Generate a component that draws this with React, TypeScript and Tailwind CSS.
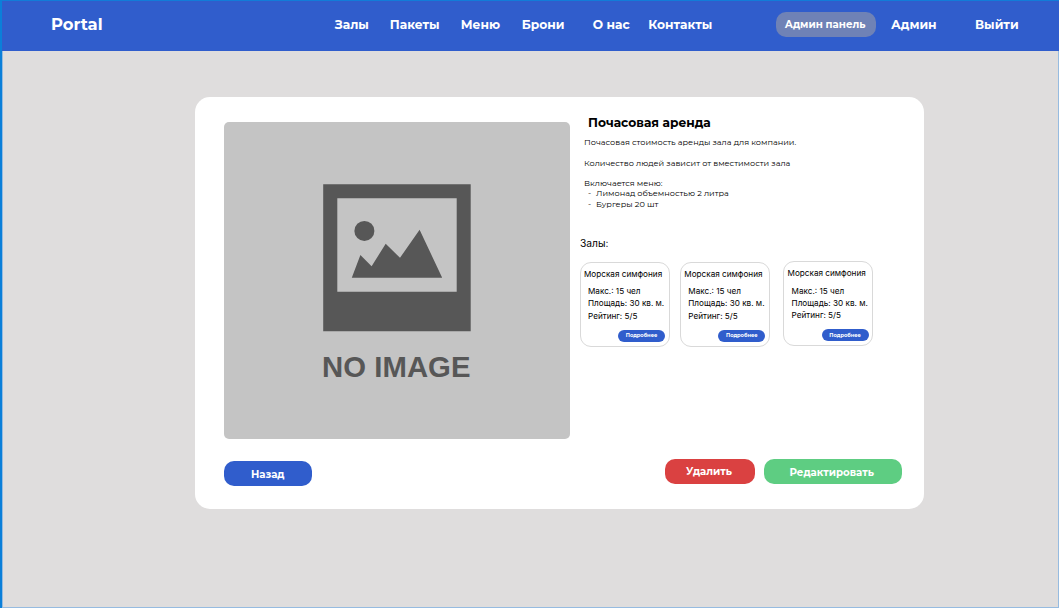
const navLinks = [
  { label: "Залы", style: "w-[55px]" },
  { label: "Пакеты", style: "w-[71px]" },
  { label: "Меню", style: "w-[61px]" },
  { label: "Брони", style: "w-[71px]" },
  { label: "О нас", style: "w-[55.5px]" },
  { label: "Контакты", style: "w-[127.5px]" },
];

const halls = [
  { id: 1, offset: "ml-0" },
  { id: 2, offset: "ml-[10px]" },
  { id: 3, offset: "ml-[13px] -mt-[0.6px]" },
];

function Header() {
  return (
    <header className="flex h-[51px] shrink-0 items-center border-t border-[#127cd8] bg-[#305dcc] pb-[3px] pl-[49px] font-['Montserrat','Open_Sans',sans-serif] text-[12.26px] font-bold whitespace-nowrap text-white">
      <span className="w-[283.8px] pb-px text-[16.35px]">Portal</span>
      <nav className="flex pt-px">
        {navLinks.map((link) => (
          <a key={link.label} className={link.style}>
            {link.label}
          </a>
        ))}
      </nav>
      <button className="flex h-[25px] w-[100.5px] items-center justify-center rounded-[10px] bg-[#6f82b6] pt-px pr-[2px] text-[10.22px]">
        Админ панель
      </button>
      <a className="ml-[14.7px] w-[84px] pt-px">Админ</a>
      <a className="pt-px">Выйти</a>
    </header>
  );
}

function ImagePlaceholder() {
  return (
    <div className="h-[317px] w-[345.5px] overflow-hidden rounded-[5px] bg-[#c4c4c4]">
      <svg viewBox="0 0 345.5 317" className="block h-full w-full">
        <path
          fillRule="evenodd"
          fill="#575757"
          d="M99.2 62.2H246.7V209.3H99.2ZM113.3 76.3V169.8H232.7V76.3Z"
        />
        <circle cx="140.4" cy="108.9" r="10" fill="#575757" />
        <path
          fill="#575757"
          d="M127.8 155.7L136.4 133L147.6 144.2L161.7 121.8L176 135.8L195.6 107.8L218.2 155.7Z"
        />
        <text
          x="98"
          y="254.8"
          textLength="148.5"
          fill="#575757"
          className="font-['Liberation_Sans',sans-serif] text-[29.3px] font-bold"
        >
          NO IMAGE
        </text>
      </svg>
    </div>
  );
}

function HallCard({ offset }: { offset: string }) {
  return (
    <article
      className={`flex h-[85px] w-[90.3px] shrink-0 flex-col rounded-[11px] border border-[#d9d9d9] pt-[5px] pl-[3.5px] text-[8.17px] leading-[12.2px] whitespace-nowrap text-black ${offset}`}
    >
      <h3>Морская симфония</h3>
      <ul className="mt-[5.5px] pl-[4px]">
        <li>Макс.: 15 чел</li>
        <li>Площадь: 30 кв. м.</li>
        <li>Рейтинг: 5/5</li>
      </ul>
      <button className="mt-[7.8px] ml-[34px] flex h-[12px] w-[47px] items-center justify-center rounded-full bg-[#305dcc] font-['Montserrat','Open_Sans',sans-serif] text-[5.11px] leading-none font-bold text-white">
        Подробнее
      </button>
    </article>
  );
}

function Details() {
  return (
    <section className="flex flex-col pt-[17.5px] pl-[10.5px] text-black">
      <h1 className="pl-[8px] font-['Montserrat','Open_Sans',sans-serif] text-[12.26px] leading-[16px] font-bold">
        Почасовая аренда
      </h1>
      <div className="mt-[6.5px] pl-[4px] font-['Montserrat','Open_Sans',sans-serif] text-[8.17px] leading-[10.3px] whitespace-nowrap text-black">
        <p>Почасовая стоимость аренды зала для компании.</p>
        <p className="mt-[10.3px]">Количество людей зависит от вместимости зала</p>
        <p className="mt-[10.3px]">Включается меню:</p>
        <ul>
          <li className="flex">
            <span className="w-[12px] pl-[4px]">-</span>Лимонад объемностью 2 литра
          </li>
          <li className="flex">
            <span className="w-[12px] pl-[4px]">-</span>Бургеры 20 шт
          </li>
        </ul>
      </div>
      <h2 className="mt-[27px] text-[10.22px] leading-[14px]">Залы:</h2>
      <div className="mt-[11.5px] -ml-[0.5px] flex">
        {halls.map((hall) => (
          <HallCard key={hall.id} offset={hall.offset} />
        ))}
      </div>
    </section>
  );
}

export default function App() {
  return (
    <div className="flex h-[608px] w-[1059px] flex-col overflow-hidden border-l-2 border-[#0b7fd9] bg-[#dfdddd] font-['Inter','Noto_Sans',sans-serif]">
      <Header />
      <div className="flex flex-1 border-r border-b border-l border-[#96bbe0]">
        <main className="mt-[46px] ml-[192px] flex h-[411.5px] w-[729px] flex-col rounded-[15px] bg-white">
          <div className="flex h-[342px]">
            <div className="pt-[25px] pl-[29px]">
              <ImagePlaceholder />
            </div>
            <Details />
          </div>
          <div className="flex pt-[20.4px] pr-[22.5px] pl-[29px] font-['Montserrat','Open_Sans',sans-serif] text-[10.22px] font-bold text-white">
            <button className="mt-[2px] flex h-[25px] w-[87.5px] items-center justify-center rounded-[10px] bg-[#305dcc] pt-px">
              Назад
            </button>
            <button className="ml-auto flex h-[25px] w-[90px] items-center justify-center rounded-[10px] bg-[#da4141] pr-[2px]">
              Удалить
            </button>
            <button className="ml-[9px] flex h-[25px] w-[137.5px] items-center justify-center rounded-[10px] bg-[#5ecd82] pt-px pr-[2px]">
              Редактировать
            </button>
          </div>
        </main>
      </div>
    </div>
  );
}
